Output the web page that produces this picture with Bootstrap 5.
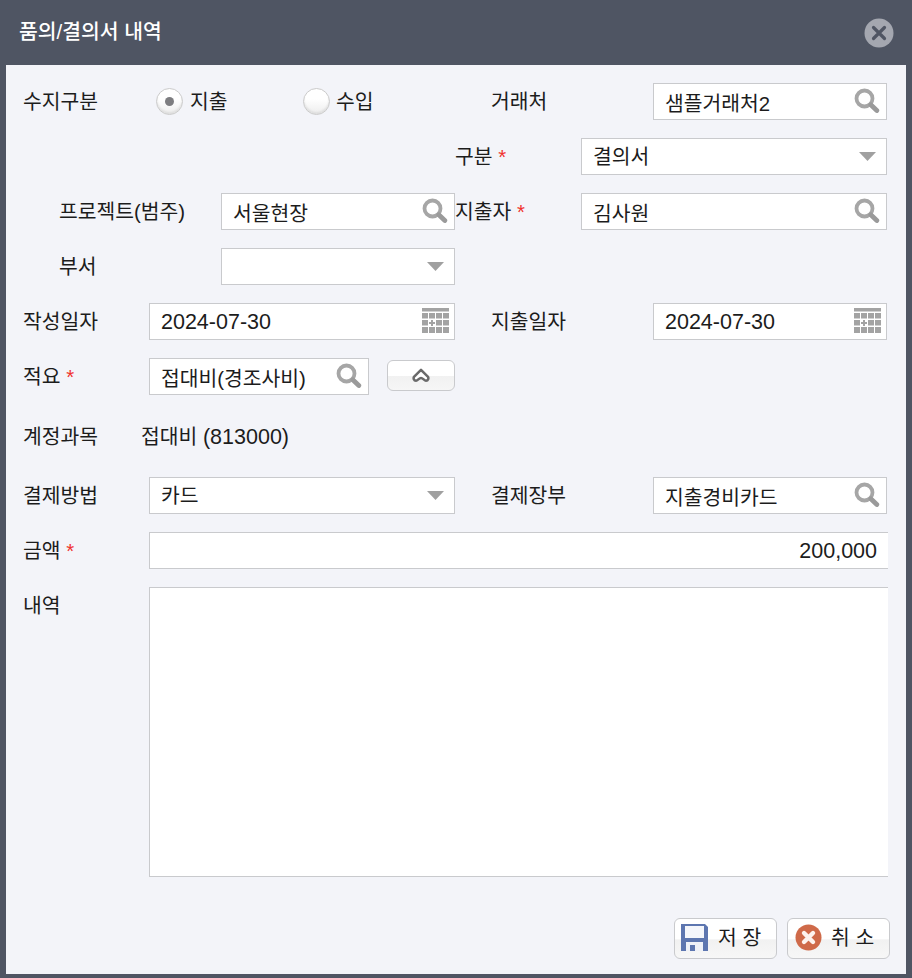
<!DOCTYPE html>
<html lang="ko">
<head>
<meta charset="utf-8">
<title>품의/결의서 내역</title>
<link rel="stylesheet" href="https://cdn.jsdelivr.net/npm/bootstrap@5.3.0/dist/css/bootstrap.min.css">
<style>
html,body{height:100%;overflow:hidden}
body{background:#4f5563;font-family:"Liberation Sans","Noto Sans CJK KR",sans-serif;font-size:20.4px;color:#1c1c1c}
.dlg{width:912px;height:978px;overflow:hidden;display:flex;flex-direction:column}
.dlg-head{height:65px;flex:none;padding:0 18px 0 19px;color:#fff;font-size:20.4px;font-weight:500}
.dlg-body{margin:0 6px;height:909px;background:#f3f4f9;padding:18px 0 0 17px;position:relative;overflow:hidden}
.frow{height:37px;margin-bottom:18px;display:flex;align-items:center}
.frow-acc{height:46px}
.half-l{width:432px;flex:none;display:flex;align-items:center}
.half-r{width:431px;margin-left:1px;flex:none;display:flex;align-items:center}
.ind{padding-left:36px}
.lbl{flex:none;line-height:37px;position:relative;top:1px;white-space:nowrap}
.w126{width:126px}.w133{width:133px}.w162{width:162px}.w125{width:125px}.g35{margin-left:35px}
.lbl.w125{margin-left:-1px;width:126px}
.req{color:#f0322d}
.fld{position:relative;flex:1 1 auto;min-width:0}
.form-control.inp,.form-select.inp{height:37px;border:1px solid #c9cacd;border-radius:0;background-image:none;background-color:#fff;font-family:inherit;font-size:20.4px;color:#1c1c1c;padding:0 36px 0 11px;box-shadow:none;line-height:33px}
.form-select.inp{padding-top:1px}
.form-control.lat{font-size:21.5px;padding-top:2px}
.latin{font-size:21.5px}
.ico{position:absolute;right:7px;top:4px;width:27px;height:27px}
.ico-cal{right:6px}
.arr{position:absolute;right:11px;top:14px;width:17px;height:9px}
.rad{width:27px;height:27px;border-radius:50%;flex:none;background:linear-gradient(#fff 40%,#ededed);border:1px solid #cbcbcb;box-shadow:inset 0 -2px 2px #dfdfdf;display:flex;align-items:center;justify-content:center}
.rad i{width:9px;height:9px;border-radius:50%;background:#7d7d80;display:block}
.rtxt1{margin-left:7px;width:113px}.rtxt2{margin-left:6px;width:118px}
.ubtn{width:68px;height:31px;margin:-2px 0 0 18px;border:1px solid #c9cacd;border-radius:6px;background:linear-gradient(#fff 50%,#f1f1f1 52%,#f6f6f6);padding:0;display:flex;align-items:center;justify-content:center;flex:none}
.sumfld{width:220px;flex:none}
.wide{width:739px;flex:none}
.wide .form-control{border-right:0}
.form-control.num{text-align:right;padding-right:11px}
.form-control.memo{height:290px;resize:none;display:block;width:739px}
.lb118{width:118px}
.foot{position:absolute;right:16px;top:853px;display:flex;gap:10px}
.fbtn{width:103px;height:41px;border:1px solid #c9cacd;border-radius:6px;background:linear-gradient(#fff 50%,#f1f1f1 54%,#f7f7f7);font-size:20.4px;color:#1c1c1c;padding:0 0 0 7px;display:flex;align-items:center;gap:9px;line-height:1;white-space:nowrap}
.fbtn svg{margin-top:-2px}
.fsave{padding-left:6px;gap:10px}
.xbtn{background:none;border:0;padding:0;width:30px;height:30px;display:block;margin-top:-3px}
</style>
</head>
<body>
<svg width="0" height="0" class="d-block" aria-hidden="true"><defs>
  <symbol id="mag" viewBox="0 0 27 27"><circle cx="11.5" cy="11.5" r="8" fill="#fff" stroke="#a6a6a6" stroke-width="3.8"/><path d="M17.8 17.8l6 5.700" stroke="#9a9a9a" stroke-width="4.800" stroke-linecap="round"/></symbol>
  <symbol id="cal" viewBox="0 0 27 27"><g fill="#a3a3a3"><rect x="0" y="1" width="27" height="3.5"/><rect x="0" y="6" width="6" height="5.5"/><rect x="7" y="6" width="6" height="5.5"/><rect x="14" y="6" width="6" height="5.5"/><rect x="21" y="6" width="6" height="5.5"/><rect x="0" y="13" width="6" height="5.5"/><path d="M9 13h2v2h2v2h-2v2H9v-2H7v-2h2z"/><rect x="14" y="13" width="6" height="5.5"/><rect x="21" y="13" width="6" height="5.5"/><rect x="0" y="20" width="6" height="6"/><rect x="7" y="20" width="6" height="6"/><rect x="14" y="20" width="6" height="6"/><rect x="21" y="20" width="6" height="6"/></g></symbol>
  <symbol id="tri" viewBox="0 0 17 9"><path d="M0 0h17L8.5 9z" fill="#a0a0a0"/></symbol>
</defs></svg>
<div class="dlg">
  <div class="dlg-head d-flex align-items-center justify-content-between">
    <span>품의/결의서 내역</span>
    <button class="xbtn" type="button" aria-label="닫기">
      <svg width="30" height="30" viewBox="0 0 30 30"><circle cx="15" cy="15" r="14.5" fill="#a4a7b0"/><path d="M9.5 9.500l11 11M20.500 9.500l-11 11" stroke="#4f5563" stroke-width="3.200" stroke-linecap="round"/></svg>
    </button>
  </div>
  <div class="dlg-body">
    <div class="frow">
      <div class="half-l">
        <span class="lbl w133">수지구분</span>
        <span class="rad"><i></i></span><span class="lbl rtxt1">지출</span>
        <span class="rad"></span><span class="lbl rtxt2">수입</span>
      </div>
      <div class="half-r">
        <span class="lbl w162 g35">거래처</span>
        <div class="fld"><input class="form-control inp" value="샘플거래처2"><svg class="ico"><use href="#mag"/></svg></div>
      </div>
    </div>
    <div class="frow">
      <div class="half-l"></div>
      <div class="half-r">
        <span class="lbl w125">구분 <span class="req">*</span></span>
        <div class="fld"><select class="form-select inp"><option>결의서</option></select><svg class="arr"><use href="#tri"/></svg></div>
      </div>
    </div>
    <div class="frow">
      <div class="half-l ind">
        <span class="lbl w162">프로젝트(범주)</span>
        <div class="fld"><input class="form-control inp" value="서울현장"><svg class="ico"><use href="#mag"/></svg></div>
      </div>
      <div class="half-r">
        <span class="lbl w125">지출자 <span class="req">*</span></span>
        <div class="fld"><input class="form-control inp" value="김사원"><svg class="ico"><use href="#mag"/></svg></div>
      </div>
    </div>
    <div class="frow">
      <div class="half-l ind">
        <span class="lbl w162">부서</span>
        <div class="fld"><select class="form-select inp"><option></option></select><svg class="arr"><use href="#tri"/></svg></div>
      </div>
    </div>
    <div class="frow">
      <div class="half-l">
        <span class="lbl w126">작성일자</span>
        <div class="fld"><input class="form-control inp lat" value="2024-07-30"><svg class="ico ico-cal"><use href="#cal"/></svg></div>
      </div>
      <div class="half-r">
        <span class="lbl w162 g35">지출일자</span>
        <div class="fld"><input class="form-control inp lat" value="2024-07-30"><svg class="ico ico-cal"><use href="#cal"/></svg></div>
      </div>
    </div>
    <div class="frow">
      <div class="half-l">
        <span class="lbl w126">적요 <span class="req">*</span></span>
        <div class="fld sumfld"><input class="form-control inp" value="접대비(경조사비)"><svg class="ico"><use href="#mag"/></svg></div>
        <button class="ubtn" type="button" aria-label="접기"><svg width="18" height="15" viewBox="0 0 18 15"><path d="M9 1.800L2.200 8.700c-1.200 1.300-.4 4 1.800 4 1.800 0 3-2.700 5-2.700s3.200 2.700 5 2.700c2.200 0 3-2.700 1.800-4z" fill="#fff" stroke="#6a6a6a" stroke-width="2.500" stroke-linejoin="round"/></svg></button>
      </div>
    </div>
    <div class="frow frow-acc">
      <span class="lbl lb118">계정과목</span><span class="lbl">접대비 <span class="latin">(813000)</span></span>
    </div>
    <div class="frow">
      <div class="half-l">
        <span class="lbl w126">결제방법</span>
        <div class="fld"><select class="form-select inp"><option>카드</option></select><svg class="arr"><use href="#tri"/></svg></div>
      </div>
      <div class="half-r">
        <span class="lbl w162 g35">결제장부</span>
        <div class="fld"><input class="form-control inp" value="지출경비카드"><svg class="ico"><use href="#mag"/></svg></div>
      </div>
    </div>
    <div class="frow">
      <span class="lbl w126">금액 <span class="req">*</span></span>
      <div class="fld wide"><input class="form-control inp lat num" value="200,000"></div>
    </div>
    <div class="d-flex">
      <span class="lbl w126">내역</span>
      <div class="wide"><textarea class="form-control inp memo"></textarea></div>
    </div>
    <div class="foot">
      <button class="fbtn fsave" type="button">
        <svg width="27" height="27" viewBox="0 0 27 27"><path d="M0 0h24l3 3v24H0z" fill="#5d76b0"/><rect x="4" y="2" width="19" height="12" fill="#f4f6fb"/><rect x="5" y="18" width="17" height="9" fill="#eef1f8"/><rect x="9" y="21" width="5" height="6" fill="#5d76b0"/></svg>
        <span>저 장</span>
      </button>
      <button class="fbtn" type="button">
        <svg width="27" height="27" viewBox="0 0 27 27"><circle cx="13.500" cy="13.500" r="13" fill="#cf6a49"/><path d="M9 9l9 9M18 9l-9 9" stroke="#fdf3ee" stroke-width="4.400" stroke-linecap="round"/></svg>
        <span>취 소</span>
      </button>
    </div>
  </div>
</div>
</body>
</html>
